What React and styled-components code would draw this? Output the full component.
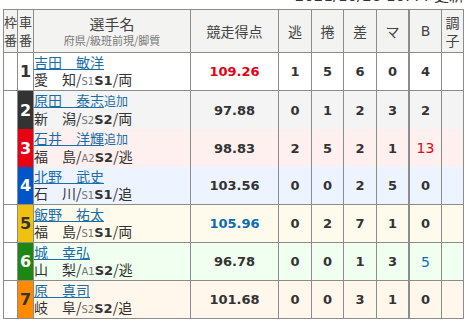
import styled, { createGlobalStyle } from "styled-components";

const GlobalStyle = createGlobalStyle`
  body {
    margin: 0;
    background: #fff;
    font-family: "Noto Sans CJK JP", "DejaVu Sans", sans-serif;
    color: #333;
  }
`;

const COLS = "13px 15px 156px 87px 32px 31px 32px 31px 32px 21px";

const ROW_BG = ["#ffffff", "#f4f4f4", "#fff0f0", "#eef4ff", "#fffbec", "#f0fff0", "#fff6ec"];
const FRAME = [
  { bg: "#ffffff", fg: "#333" },
  { bg: "#333333", fg: "#fff" },
  { bg: "#e60012", fg: "#fff" },
  { bg: "#0055c8", fg: "#fff" },
  { bg: "#f0c10e", fg: "#333" },
  { bg: "#1e8612", fg: "#fff" },
  { bg: "#ff8a00", fg: "#333" },
];

const riders = [
  { name: "吉田　敏洋", pref: "愛　知", prev: "S1", cur: "S1", leg: "両", score: "109.26", scoreColor: "#e60012", stats: [1, 5, 6, 0], b: 4 },
  { name: "原田　泰志", added: true, pref: "新　潟", prev: "S2", cur: "S2", leg: "両", score: "97.88", stats: [0, 1, 2, 3], b: 2 },
  { name: "石井　洋輝", added: true, pref: "福　島", prev: "A2", cur: "S2", leg: "逃", score: "98.83", stats: [2, 5, 2, 1], b: 13, bColor: "#e60012" },
  { name: "北野　武史", pref: "石　川", prev: "S1", cur: "S1", leg: "追", score: "103.56", stats: [0, 0, 2, 5], b: 0 },
  { name: "飯野　祐太", pref: "福　島", prev: "S1", cur: "S1", leg: "両", score: "105.96", scoreColor: "#0a6db3", stats: [0, 2, 7, 1], b: 0 },
  { name: "城　幸弘", pref: "山　梨", prev: "A1", cur: "S2", leg: "逃", score: "96.78", stats: [0, 0, 1, 3], b: 5, bColor: "#0a6db3" },
  { name: "原　真司", pref: "岐　阜", prev: "S2", cur: "S2", leg: "追", score: "101.68", stats: [0, 0, 3, 1], b: 0 },
];

const Page = styled.div`
  width: 461px;
  padding-left: 3px;
`;

const Stamp = styled.div`
  height: 18px;
  margin-top: -13px;
  margin-bottom: 4px;
  text-align: right;
  font-family: "DejaVu Sans", "Noto Sans CJK JP", sans-serif;
  font-size: 15px;
  line-height: 18px;
  color: #333;
  white-space: nowrap;
`;

const Board = styled.div`
  display: flex;
  flex-direction: column;
  gap: 1px;
  padding: 1px;
  background: #8c8c8c;
`;

const Row = styled.div`
  display: grid;
  grid-template-columns: ${COLS};
  gap: 1px;
  height: ${(p) => p.$h}px;
`;

const HeadCell = styled.div`
  display: flex;
  flex-direction: column;
  align-items: center;
  justify-content: center;
  background: #f3f3f1;
  color: #444;
  font-size: ${(p) => (p.$small ? 13 : 14)}px;
  line-height: 18px;
  ${(p) => p.$b && "border-left: 1px solid #8c8c8c;"}
  font-family: ${(p) => (p.$latin ? '"DejaVu Sans", sans-serif' : "inherit")};
`;

const HeadTitle = styled.span`
  font-size: 15px;
  line-height: 19px;
`;

const HeadSub = styled.span`
  font-size: 11px;
  line-height: 15px;
  color: #777;
`;

const Cell = styled.div`
  display: flex;
  align-items: center;
  justify-content: center;
  background: ${(p) => p.$bg};
  ${(p) => p.$b && "border-left: 1px solid #8c8c8c;"}
`;

const FrameCell = styled(Cell)`
  background: ${(p) => p.$bg};
  color: ${(p) => p.$fg};
  font-family: "DejaVu Sans", sans-serif;
  font-weight: bold;
  font-size: 16px;
`;

const NameCell = styled(Cell)`
  flex-direction: column;
  align-items: flex-start;
  justify-content: center;
  font-size: 14px;
`;

const NameLine = styled.div`
  line-height: 18px;
  white-space: nowrap;
`;

const NameLink = styled.a`
  color: #1a6ea8;
  text-decoration: underline;
  text-underline-offset: 1px;
  cursor: pointer;
`;

const Added = styled.span`
  font-size: 12px;
  color: #1a6ea8;
`;

const Grade = styled.div`
  line-height: 17px;
  color: #333;
  white-space: nowrap;
`;

const PrevGrade = styled.span`
  font-size: 10px;
  color: #777;
  font-family: "DejaVu Sans", sans-serif;
`;

const CurGrade = styled.span`
  font-family: "DejaVu Sans", sans-serif;
  font-weight: bold;
  font-size: 13px;
`;

const NumCell = styled(Cell)`
  font-family: "DejaVu Sans", sans-serif;
  font-weight: ${(p) => (p.$thin ? "normal" : "bold")};
  font-size: ${(p) => (p.$thin ? 14 : 13)}px;
  color: ${(p) => p.$color || "#333"};
`;

export default function App() {
  return (
    <>
      <GlobalStyle />
      <Page>
        <Stamp>2021/10/28 10:44 更新</Stamp>
        <Board>
          <Row $h={42}>
            <HeadCell $small>枠<br />番</HeadCell>
            <HeadCell $small>車<br />番</HeadCell>
            <HeadCell>
              <HeadTitle>選手名</HeadTitle>
              <HeadSub>府県/級班前現/脚質</HeadSub>
            </HeadCell>
            <HeadCell>競走得点</HeadCell>
            <HeadCell>逃</HeadCell>
            <HeadCell>捲</HeadCell>
            <HeadCell>差</HeadCell>
            <HeadCell>マ</HeadCell>
            <HeadCell $b $latin>B</HeadCell>
            <HeadCell>調<br />子</HeadCell>
          </Row>
          {riders.map((r, i) => {
            const bg = ROW_BG[i];
            return (
              <Row key={r.name} $h={37}>
                <Cell $bg="#fff" />
                <FrameCell $bg={FRAME[i].bg} $fg={FRAME[i].fg}>{i + 1}</FrameCell>
                <NameCell $bg={bg}>
                  <NameLine>
                    <NameLink>{r.name}</NameLink>
                    {r.added && <Added>追加</Added>}
                  </NameLine>
                  <Grade>
                    {r.pref}/<PrevGrade>{r.prev}</PrevGrade><CurGrade>{r.cur}</CurGrade>/{r.leg}
                  </Grade>
                </NameCell>
                <NumCell $bg={bg} $color={r.scoreColor}>{r.score}</NumCell>
                {r.stats.map((s, k) => (
                  <NumCell key={k} $bg={bg}>{s}</NumCell>
                ))}
                <NumCell $bg={bg} $b $color={r.bColor} $thin={!!r.bColor}>{r.b}</NumCell>
                <Cell $bg={bg} />
              </Row>
            );
          })}
        </Board>
      </Page>
    </>
  );
}
